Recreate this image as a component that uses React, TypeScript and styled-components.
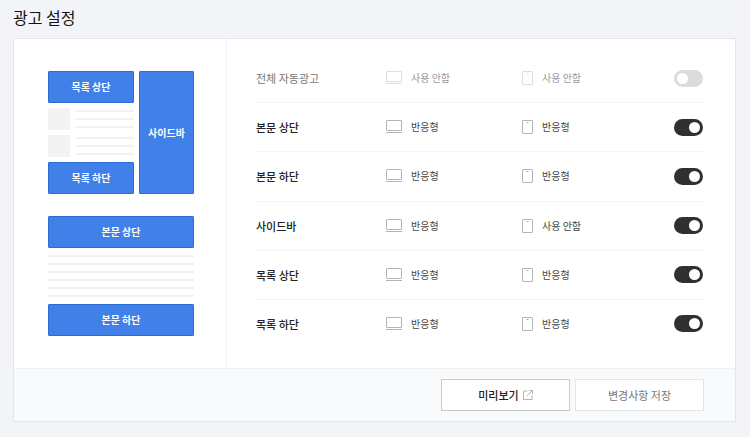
import React, { useState } from "react";
import styled, { createGlobalStyle } from "styled-components";

const GlobalStyle = createGlobalStyle`
  *, *::before, *::after { box-sizing: border-box; }
  body {
    margin: 0;
    background: #f2f4f7;
    color: #222;
    font-family: "Noto Sans CJK KR", sans-serif;
    font-size: 11px;
    line-height: 16px;
  }
  button, input { font: inherit; margin: 0; }
`;

const Page = styled.main`
  padding: 5px 14px 15px 13px;
`;

const Title = styled.h1`
  margin: 0 0 9px;
  font-size: 16px;
  font-weight: 400;
  line-height: 24px;
  color: #111;
`;

const Panel = styled.section`
  border: 1px solid #e4e7ea;
  background: #fff;
`;

const Content = styled.div`
  display: grid;
  grid-template-columns: 213px 1fr;
`;

const PreviewColumn = styled.div`
  display: flex;
  flex-direction: column;
  gap: 22px;
  padding: 32px 32px 32px 34px;
  border-right: 1px solid #f0f1f3;
`;

const ListPreview = styled.div`
  display: grid;
  grid-template-columns: 1fr 55px;
  gap: 5px;
`;

const Stack = styled.div`
  display: flex;
  flex-direction: column;
  gap: 5px;
`;

const AdBlock = styled.div`
  display: flex;
  align-items: center;
  justify-content: center;
  min-height: 32px;
  border: 1px solid #286fd4;
  border-radius: 1px;
  background: #4080e8;
  color: #fff;
  font-size: 10px;
  font-weight: 700;
`;

const Post = styled.div`
  display: grid;
  grid-template-columns: 22px 1fr;
  gap: 5px;
`;

const Thumb = styled.div`
  height: 22px;
  background: #f3f3f3;
`;

const Lines = styled.div`
  display: flex;
  flex-direction: column;
  gap: 6px;
  padding: 2px 0;
`;

const Line = styled.div`
  height: 2px;
  background: #f2f2f2;
`;

const SettingList = styled.ul`
  display: grid;
  grid-auto-rows: 1fr;
  margin: 0;
  padding: 15px 32px 19px 29px;
  list-style: none;
`;

const SettingRow = styled.li<{ $muted: boolean }>`
  display: grid;
  grid-template-columns: 130fr 136fr 152fr 29px;
  align-items: center;
  border-bottom: 1px solid #f4f4f4;
  color: ${({ $muted }) => ($muted ? "#777" : "#222")};

  &:last-child { border-bottom-color: transparent; }
`;

const SettingLabel = styled.label<{ $muted: boolean }>`
  font-weight: ${({ $muted }) => ($muted ? 400 : 500)};
`;

const Device = styled.span<{ $muted: boolean }>`
  display: flex;
  align-items: center;
  gap: 9px;
  font-size: 10px;
  color: ${({ $muted }) => ($muted ? "#999" : "#444")};

  svg {
    flex: none;
    color: ${({ $muted }) => ($muted ? "#dedede" : "#b4b4b4")};
  }
`;

const Switch = styled.input`
  appearance: none;
  display: flex;
  align-items: center;
  width: 29px;
  height: 17px;
  padding: 0 3px;
  border-radius: 9px;
  background: #dcdcdc;
  cursor: pointer;

  &::before {
    content: "";
    width: 11px;
    height: 11px;
    border-radius: 50%;
    background: #fff;
  }

  &:checked {
    justify-content: flex-end;
    background: #303030;
  }
`;

const Footer = styled.footer`
  display: flex;
  justify-content: flex-end;
  gap: 5px;
  padding: 10px 31px;
  border-top: 1px solid #f0f1f3;
  background: #f9fafc;
`;

const Button = styled.button<{ $strong?: boolean }>`
  display: flex;
  align-items: center;
  justify-content: center;
  gap: 4px;
  width: 129px;
  height: 32px;
  padding: 0;
  border: 1px solid ${({ $strong }) => ($strong ? "#c5cace" : "#e1e4e8")};
  background: #fff;
  color: ${({ $strong }) => ($strong ? "#222" : "#777")};
  font-weight: ${({ $strong }) => ($strong ? 500 : 400)};
  cursor: pointer;
`;

const MonitorIcon = () => (
  <svg width="16" height="14" viewBox="0 0 16 14" fill="none" stroke="currentColor" aria-hidden="true">
    <rect x="0.5" y="0.5" width="15" height="10" rx="0.5" />
    <path d="M0 12.5h16" />
  </svg>
);

const PhoneIcon = () => (
  <svg width="11" height="14" viewBox="0 0 11 14" fill="none" stroke="currentColor" aria-hidden="true">
    <rect x="0.5" y="0.5" width="10" height="13" rx="0.5" />
    <path d="M4.5 2.5h2" />
  </svg>
);

const ExternalIcon = () => (
  <svg width="10" height="10" viewBox="0 0 10 10" fill="none" stroke="#aaa" strokeWidth="0.9" aria-hidden="true">
    <path d="M4.5 1H0.5v8.5H9V5.5M6 0.5h3.5V4M9.5 0.5L4 6" />
  </svg>
);

type Setting = { id: string; label: string; desktop: string; mobile: string; on: boolean };

const initialSettings: Setting[] = [
  { id: "auto", label: "전체 자동광고", desktop: "사용 안함", mobile: "사용 안함", on: false },
  { id: "body-top", label: "본문 상단", desktop: "반응형", mobile: "반응형", on: true },
  { id: "body-bottom", label: "본문 하단", desktop: "반응형", mobile: "반응형", on: true },
  { id: "sidebar", label: "사이드바", desktop: "반응형", mobile: "사용 안함", on: true },
  { id: "list-top", label: "목록 상단", desktop: "반응형", mobile: "반응형", on: true },
  { id: "list-bottom", label: "목록 하단", desktop: "반응형", mobile: "반응형", on: true },
];

const TextLines = ({ count }: { count: number }) => (
  <Lines>
    {Array.from({ length: count }, (_, i) => (
      <Line key={i} />
    ))}
  </Lines>
);

const PostPreview = () => (
  <Post>
    <Thumb />
    <TextLines count={3} />
  </Post>
);

export default function App() {
  const [settings, setSettings] = useState(initialSettings);
  const toggle = (id: string) =>
    setSettings((all) => all.map((s) => (s.id === id ? { ...s, on: !s.on } : s)));

  return (
    <>
      <GlobalStyle />
      <Page>
        <Title>광고 설정</Title>
        <Panel>
          <Content>
            <PreviewColumn>
              <ListPreview>
                <Stack>
                  <AdBlock>목록 상단</AdBlock>
                  <PostPreview />
                  <PostPreview />
                  <AdBlock>목록 하단</AdBlock>
                </Stack>
                <AdBlock>사이드바</AdBlock>
              </ListPreview>
              <Stack>
                <AdBlock>본문 상단</AdBlock>
                <TextLines count={6} />
                <AdBlock>본문 하단</AdBlock>
              </Stack>
            </PreviewColumn>
            <SettingList>
              {settings.map((s) => (
                <SettingRow key={s.id} $muted={!s.on}>
                  <SettingLabel htmlFor={s.id} $muted={!s.on}>{s.label}</SettingLabel>
                  <Device $muted={!s.on}>
                    <MonitorIcon />
                    {s.desktop}
                  </Device>
                  <Device $muted={!s.on}>
                    <PhoneIcon />
                    {s.mobile}
                  </Device>
                  <Switch type="checkbox" role="switch" id={s.id} checked={s.on} onChange={() => toggle(s.id)} />
                </SettingRow>
              ))}
            </SettingList>
          </Content>
          <Footer>
            <Button type="button" $strong>
              미리보기
              <ExternalIcon />
            </Button>
            <Button type="button">변경사항 저장</Button>
          </Footer>
        </Panel>
      </Page>
    </>
  );
}
